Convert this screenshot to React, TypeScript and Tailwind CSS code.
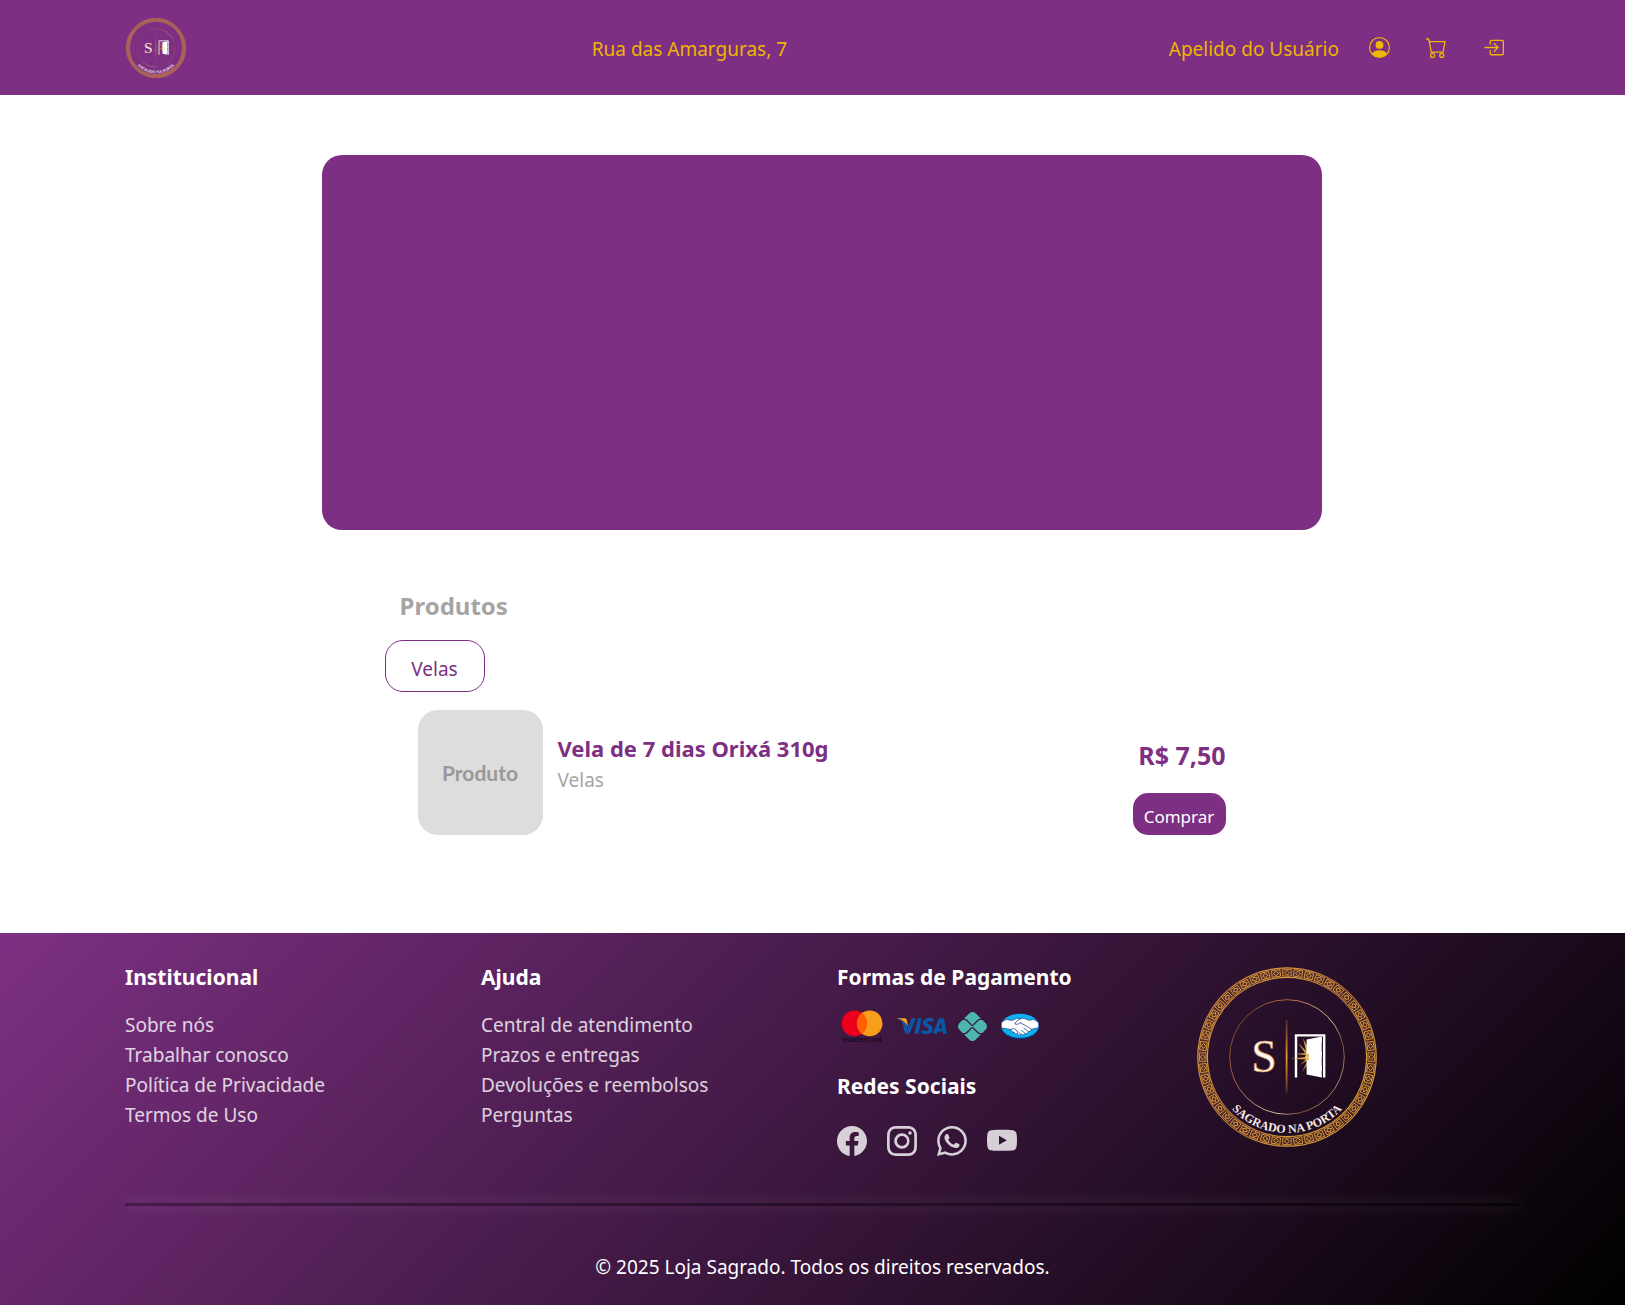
import { useId } from 'react';
import type { ReactNode } from 'react';
import {
  BsBoxArrowInRight,
  BsCart,
  BsFacebook,
  BsInstagram,
  BsPersonCircle,
  BsWhatsapp,
  BsYoutube,
} from 'react-icons/bs';
import { FaPix } from 'react-icons/fa6';
import { SiVisa } from 'react-icons/si';

const RING_TILES = Array.from({ length: 48 }, (_, i) => i * 7.5);

function Logo({ className }: { className: string }) {
  const id = useId();
  const ring = `${id}-ring`;
  const thin = `${id}-thin`;
  const bar = `${id}-bar`;
  const arc = `${id}-arc`;
  return (
    <svg viewBox="0 0 180 180" className={className} role="img" aria-label="Sagrado na Porta">
      <defs>
        <linearGradient id={ring} x1="0" y1="0" x2="1" y2="1">
          <stop offset="0" stopColor="#b8702c" />
          <stop offset="0.25" stopColor="#d99a3c" />
          <stop offset="0.5" stopColor="#b06a3a" />
          <stop offset="0.8" stopColor="#e0a33a" />
          <stop offset="1" stopColor="#a9622f" />
        </linearGradient>
        <linearGradient id={thin} x1="0" y1="0.2" x2="1" y2="0.8">
          <stop offset="0" stopColor="#7a4330" />
          <stop offset="0.3" stopColor="#a8683f" />
          <stop offset="0.65" stopColor="#d9b9a4" />
          <stop offset="0.8" stopColor="#7d4a35" />
          <stop offset="1" stopColor="#c49a80" />
        </linearGradient>
        <linearGradient id={bar} gradientUnits="userSpaceOnUse" x1="0" y1="52" x2="0" y2="127">
          <stop offset="0" stopColor="#8a4a2a" stopOpacity="0.4" />
          <stop offset="0.3" stopColor="#b4692c" />
          <stop offset="0.5" stopColor="#e89a35" />
          <stop offset="0.75" stopColor="#b4692c" />
          <stop offset="1" stopColor="#8a4a2a" stopOpacity="0.4" />
        </linearGradient>
        <path id={arc} d="M14 90 A76 76 0 0 0 166 90" />
      </defs>

      <circle cx="90" cy="90" r="89.2" fill="none" stroke={`url(#${ring})`} strokeWidth="1.2" />
      <circle cx="90" cy="90" r="79.6" fill="none" stroke={`url(#${ring})`} strokeWidth="1.2" />
      <circle cx="90" cy="90" r="84.5" fill="none" stroke="#b9742f" strokeOpacity="0.28" strokeWidth="9" />
      {RING_TILES.map((angle) => (
        <g key={angle} transform={`rotate(${angle} 90 90)`} fill="none" stroke="#d9993c" strokeWidth="0.9">
          <path d="M85.8 9V2.4H94.2V9Z" />
          <path d="M90 3.4 92.6 5.7 90 8 87.4 5.7Z" />
        </g>
      ))}
      <circle cx="90" cy="90" r="57.3" fill="none" stroke={`url(#${thin})`} strokeWidth="1" />

      <text
        x="67"
        y="105"
        textAnchor="middle"
        fontFamily="Liberation Serif, serif"
        fontSize="46"
        fill="#fffaf2"
        stroke="#d08a50"
        strokeWidth="0.7"
      >
        S
      </text>
      <path d="M89.6 53V126" stroke={`url(#${bar})`} strokeWidth="1.8" />

      <path d="M99 110.5V68.4H127.2V110.5" fill="none" stroke="#fff" strokeWidth="2.4" />
      <path
        d="M111 90 101 76 109 84 106 71 112 83ZM111 90 94 91.5 109 92.5 103 98 111 93 105 105 113 94ZM109 88 98 87 110 86Z"
        fill="#d9a53c"
      />
      <path d="M109.6 72.5 125 69.5V110.5L109.6 107.5Z" fill="#fff" />
      <path d="M125.2 75V85M125.2 90V99M125.2 104V109" stroke="#3a2a3c" strokeWidth="1" />
      <path d="M111 87V89M111 91V93" stroke="#d9a53c" strokeWidth="1.8" />
      <circle cx="110" cy="90" r="2" fill="#f0c45a" />

      <text fontFamily="Liberation Serif, serif" fontSize="12" fontWeight="700" fill="#f6e9e6">
        <textPath href={`#${arc}`} startOffset="50%" textAnchor="middle">
          SAGRADO NA PORTA
        </textPath>
      </text>
    </svg>
  );
}

function Mastercard() {
  return (
    <svg viewBox="0 0 42 34" className="h-[34px] w-[42px]" role="img" aria-label="Mastercard">
      <circle cx="13.5" cy="14.4" r="12.8" fill="#eb001b" />
      <circle cx="28.7" cy="14.4" r="12.8" fill="#f79e1b" />
      <path d="M21.1 4.1A12.8 12.8 0 0 1 21.1 24.7A12.8 12.8 0 0 1 21.1 4.1Z" fill="#ff5f00" />
      <text x="21" y="33" textAnchor="middle" fontFamily="Lato, sans-serif" fontSize="8" fill="#0b0510">
        mastercard
      </text>
    </svg>
  );
}

function Visa() {
  return (
    <span className="relative block h-[50px] w-[50px]">
      <SiVisa size={50} color="#0b57a4" title="Visa" />
      <svg viewBox="0 0 50 50" className="absolute inset-0 h-[50px] w-[50px]" aria-hidden="true">
        <path d="M0.2 17.2H7.4C8.6 17.2 9.5 17.8 9.8 19L11.4 26.5C9.4 21.8 6 19 0.2 17.6Z" fill="#f7a11b" />
      </svg>
    </span>
  );
}

function MercadoPago() {
  return (
    <svg viewBox="0 0 40 28" className="h-7 w-10" role="img" aria-label="Mercado Pago">
      <ellipse cx="20" cy="14.6" rx="19" ry="12.6" fill="#123a80" />
      <ellipse cx="20" cy="13.8" rx="18.8" ry="12" fill="#0bb1f0" />
      <path
        d="M1.9 9.8 7 7.2C10.5 8.8 12.7 8.7 15 7.1C16.8 5.9 18.7 6.3 20.2 7C22.5 5.8 24 6 25.8 7.1C28.2 8.5 30.5 8.5 33 7.2L38.2 10C38.9 12.2 38.8 14 38.3 15.7L31.5 17.3C31 19.2 29.6 19.7 28.4 19.5C27.9 21.2 26.6 21.9 25.2 21.4C24.3 23 22.7 23.2 21.4 22.4C19.9 23.7 17.9 23.2 17.3 21.7C15.7 22.3 14.4 21.5 14.1 20.1C12.4 20.4 11 19.3 11.1 17.7L1.7 15.8C1.2 14 1.2 12 1.9 9.8Z"
        fill="#fff"
        stroke="#1d3f85"
        strokeWidth="0.7"
      />
      <path
        d="M20.2 7C17.8 7.8 16 9.6 14.8 11.8C16.5 12.8 18.6 12.3 20.2 10.7C23 12.2 27.5 14.5 31.5 17.3M11.1 17.7C11.6 16.2 13.4 15.9 14.2 17.2C15.5 16.8 16.5 17.6 16.4 18.9C17.9 18.9 18.3 20.3 17.3 21.7M21.4 22.4 19.2 20.7M25.2 21.4 21.5 18.6M28.4 19.5 24 16.2"
        fill="none"
        stroke="#1d3f85"
        strokeWidth="0.8"
        strokeLinecap="round"
      />
    </svg>
  );
}

function LinkColumn({ title, links }: { title: string; links: string[] }) {
  return (
    <nav aria-label={title}>
      <h2 className="text-[21px] leading-[30px] font-bold text-white">{title}</h2>
      <ul className="mt-[18px]">
        {links.map((link) => (
          <li key={link}>
            <a href="#" className="block text-[19px] leading-[30px] text-white/80">
              {link}
            </a>
          </li>
        ))}
      </ul>
    </nav>
  );
}

function IconLink({ label, children }: { label: string; children: ReactNode }) {
  return (
    <a href="#" aria-label={label}>
      {children}
    </a>
  );
}

export default function App() {
  return (
    <div className="flex min-h-screen flex-col bg-white font-['Noto_Sans','Open_Sans',sans-serif] text-[19px]">
      <header className="flex h-[95px] items-center justify-between bg-[#7d3083] pr-[121px] pl-[126px] text-[#efb501]">
        <a href="#">
          <Logo className="size-[60px]" />
        </a>
        <p className="pt-0.5 pl-6 leading-[30px]">Rua das Amarguras, 7</p>
        <div className="flex items-center">
          <span className="mr-[30px] pt-0.5 leading-[30px]">Apelido do Usuário</span>
          <nav className="flex items-center gap-9" aria-label="Conta">
            <IconLink label="Perfil">
              <BsPersonCircle size={21} />
            </IconLink>
            <IconLink label="Carrinho">
              <BsCart size={21} />
            </IconLink>
            <IconLink label="Sair">
              <BsBoxArrowInRight size={21} />
            </IconLink>
          </nav>
        </div>
      </header>

      <main className="flex-1 pt-[60px] pr-[105px] pb-[97px] pl-[124px]">
        <div className="mx-auto h-[375px] max-w-[1000px] rounded-[20px] bg-[#7d3083]" />

        <section className="mx-auto mt-[58px] max-w-[875px]">
          <h1 className="pl-[15px] text-2xl leading-9 font-bold text-[#a5a5a5]">Produtos</h1>
          <button
            type="button"
            className="mt-4 h-[52px] w-[100px] rounded-[18px] border border-[#7d3083] pt-1.5 text-[#7d3083]"
          >
            Velas
          </button>

          <article className="mt-[18px] flex pr-[34px] pl-[33px]">
            <div className="flex size-[125px] items-center justify-center rounded-[20px] bg-[#dddddd] font-['Lato',sans-serif] text-[21px] font-bold text-[#999999]">
              Produto
            </div>
            <div className="ml-[15px] flex-1 pt-[23px]">
              <h2 className="mb-0.5 text-[22px] leading-[30px] font-bold text-[#7d3083]">Vela de 7 dias Orixá 310g</h2>
              <p className="leading-[30px] text-[#a5a5a5]">Velas</p>
            </div>
            <div className="flex flex-col items-end justify-between pt-[27px]">
              <p className="text-[25px] leading-9 font-bold text-[#7d3083]">R$ 7,50</p>
              <button
                type="button"
                className="h-[42px] w-[93px] rounded-[15px] bg-[#7d3083] pt-1.5 text-[17px] text-white"
              >
                Comprar
              </button>
            </div>
          </article>
        </section>
      </main>

      <footer className="bg-linear-[135deg,#7d3083,#000000] pt-[29px] pr-[105px] pb-[23px] pl-[125px] text-white">
        <div className="grid grid-cols-[356px_356px_360px_1fr]">
          <LinkColumn
            title="Institucional"
            links={['Sobre nós', 'Trabalhar conosco', 'Política de Privacidade', 'Termos de Uso']}
          />
          <LinkColumn
            title="Ajuda"
            links={['Central de atendimento', 'Prazos e entregas', 'Devoluções e reembolsos', 'Perguntas']}
          />
          <div>
            <h2 className="text-[21px] leading-[30px] font-bold">Formas de Pagamento</h2>
            <div className="mt-[9px] flex h-[50px] items-center pl-1">
              <Mastercard />
              <span className="ml-[14px]">
                <Visa />
              </span>
              <FaPix size={29} color="#4db6ac" className="ml-[11px]" title="Pix" />
              <span className="ml-[13px]">
                <MercadoPago />
              </span>
            </div>
            <h2 className="mt-5 text-[21px] leading-[30px] font-bold">Redes Sociais</h2>
            <div className="mt-[25px] flex gap-5 text-white/80">
              <IconLink label="Facebook">
                <BsFacebook size={30} />
              </IconLink>
              <IconLink label="Instagram">
                <BsInstagram size={30} />
              </IconLink>
              <IconLink label="WhatsApp">
                <BsWhatsapp size={30} />
              </IconLink>
              <IconLink label="YouTube">
                <BsYoutube size={30} />
              </IconLink>
            </div>
          </div>
          <div className="pt-[5px]">
            <Logo className="size-[180px]" />
          </div>
        </div>
        <hr className="mt-[47px] h-[3px] border-0 bg-black/30 shadow-[0_0_15px_rgba(255,255,255,0.2)]" />
        <p className="mt-[46px] text-center leading-[30px]">© 2025 Loja Sagrado. Todos os direitos reservados.</p>
      </footer>
    </div>
  );
}
